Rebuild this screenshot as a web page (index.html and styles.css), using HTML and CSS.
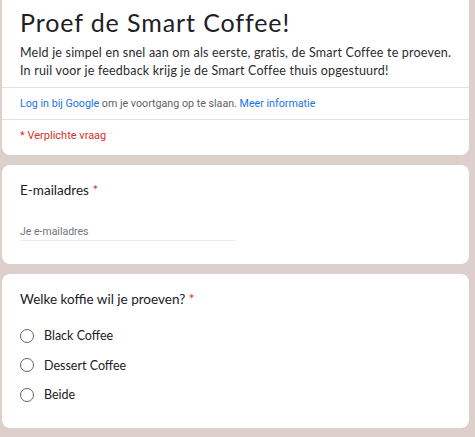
FILE: index.html
```html
<!DOCTYPE html>
<html>
<head>
    <title>Proef de Smart Coffee!</title>
    <link rel="stylesheet" href="styles.css">
</head>
<body>
    <div class="form">
        <section class="card header-card">
            <div class="header-text">
                <h1 class="form-title">Proef de Smart Coffee!</h1>
                <p class="form-desc">Meld je simpel en snel aan om als eerste, gratis, de Smart Coffee te proeven.<br>In ruil voor je feedback krijg je de Smart Coffee thuis opgestuurd!</p>
            </div>
            <div class="login-row">
                <a class="link" href="#">Log in bij Google</a> om je voortgang op te slaan. <a class="link" href="#">Meer informatie</a>
            </div>
            <div class="required-row">* Verplichte vraag</div>
        </section>

        <section class="card question">
            <div class="question-title">E-mailadres <span class="star">*</span></div>
            <div class="text-input">Je e-mailadres</div>
        </section>

        <section class="card question">
            <div class="question-title">Welke koffie wil je proeven? <span class="star">*</span></div>
            <div class="options">
                <label class="option"><span class="radio"></span>Black Coffee</label>
                <label class="option"><span class="radio"></span>Dessert Coffee</label>
                <label class="option"><span class="radio"></span>Beide</label>
            </div>
        </section>
    </div>
</body>
</html>
```

FILE: styles.css
```css
body {
    margin: 0;
    background-color: #ddcfcb;
    font-family: Lato, "Noto Sans", sans-serif;
    color: #202124;
}

.form {
    width: 467px;
    margin-left: 2px;
    display: flex;
    flex-direction: column;
    gap: 10px;
}

.card {
    background-color: #fff;
    border-radius: 8px;
}

.header-card {
    border-top-left-radius: 0;
    border-top-right-radius: 0;
}

.header-text {
    padding: 6px 12px 7px 18px;
    border-bottom: 1px solid #e2e2e2;
}

.form-title {
    margin: 0;
    font-size: 25px;
    font-weight: normal;
    line-height: 32px;
    letter-spacing: 0.9px;
}

.form-desc {
    margin: 6px 0 0 0;
    font-size: 12.5px;
    line-height: 18px;
    letter-spacing: 0.2px;
    white-space: nowrap;
    color: #2b2b2e;
}

.login-row {
    padding: 0 18px;
    height: 31px;
    line-height: 31px;
    font-family: Roboto, sans-serif;
    font-size: 10.7px;
    color: #5f6368;
    border-bottom: 1px solid #e2e2e2;
}

.link {
    color: #1a73e8;
    text-decoration: none;
}

.required-row {
    padding: 0 18px;
    height: 35px;
    line-height: 31px;
    font-family: Roboto, sans-serif;
    font-size: 11px;
    color: #d93025;
}

.question {
    padding: 15px 18px 0 18px;
}

.question-title {
    font-size: 13.5px;
    line-height: 20px;
}

.star {
    color: #d93025;
}

.text-input {
    width: 216px;
    margin-top: 25px;
    padding-bottom: 2px;
    font-family: Roboto, sans-serif;
    font-size: 10.5px;
    color: #70757a;
    border-bottom: 1px solid #eaeaea;
    margin-bottom: 23px;
}

.options {
    display: flex;
    flex-direction: column;
    padding: 12px 0 18px 0;
}

.option {
    display: flex;
    align-items: center;
    height: 29.5px;
    font-size: 12.5px;
    color: #202124;
}

.radio {
    width: 12px;
    height: 12px;
    border: 1.5px solid #5f6368;
    border-radius: 50%;
    margin-right: 10px;
}
```
